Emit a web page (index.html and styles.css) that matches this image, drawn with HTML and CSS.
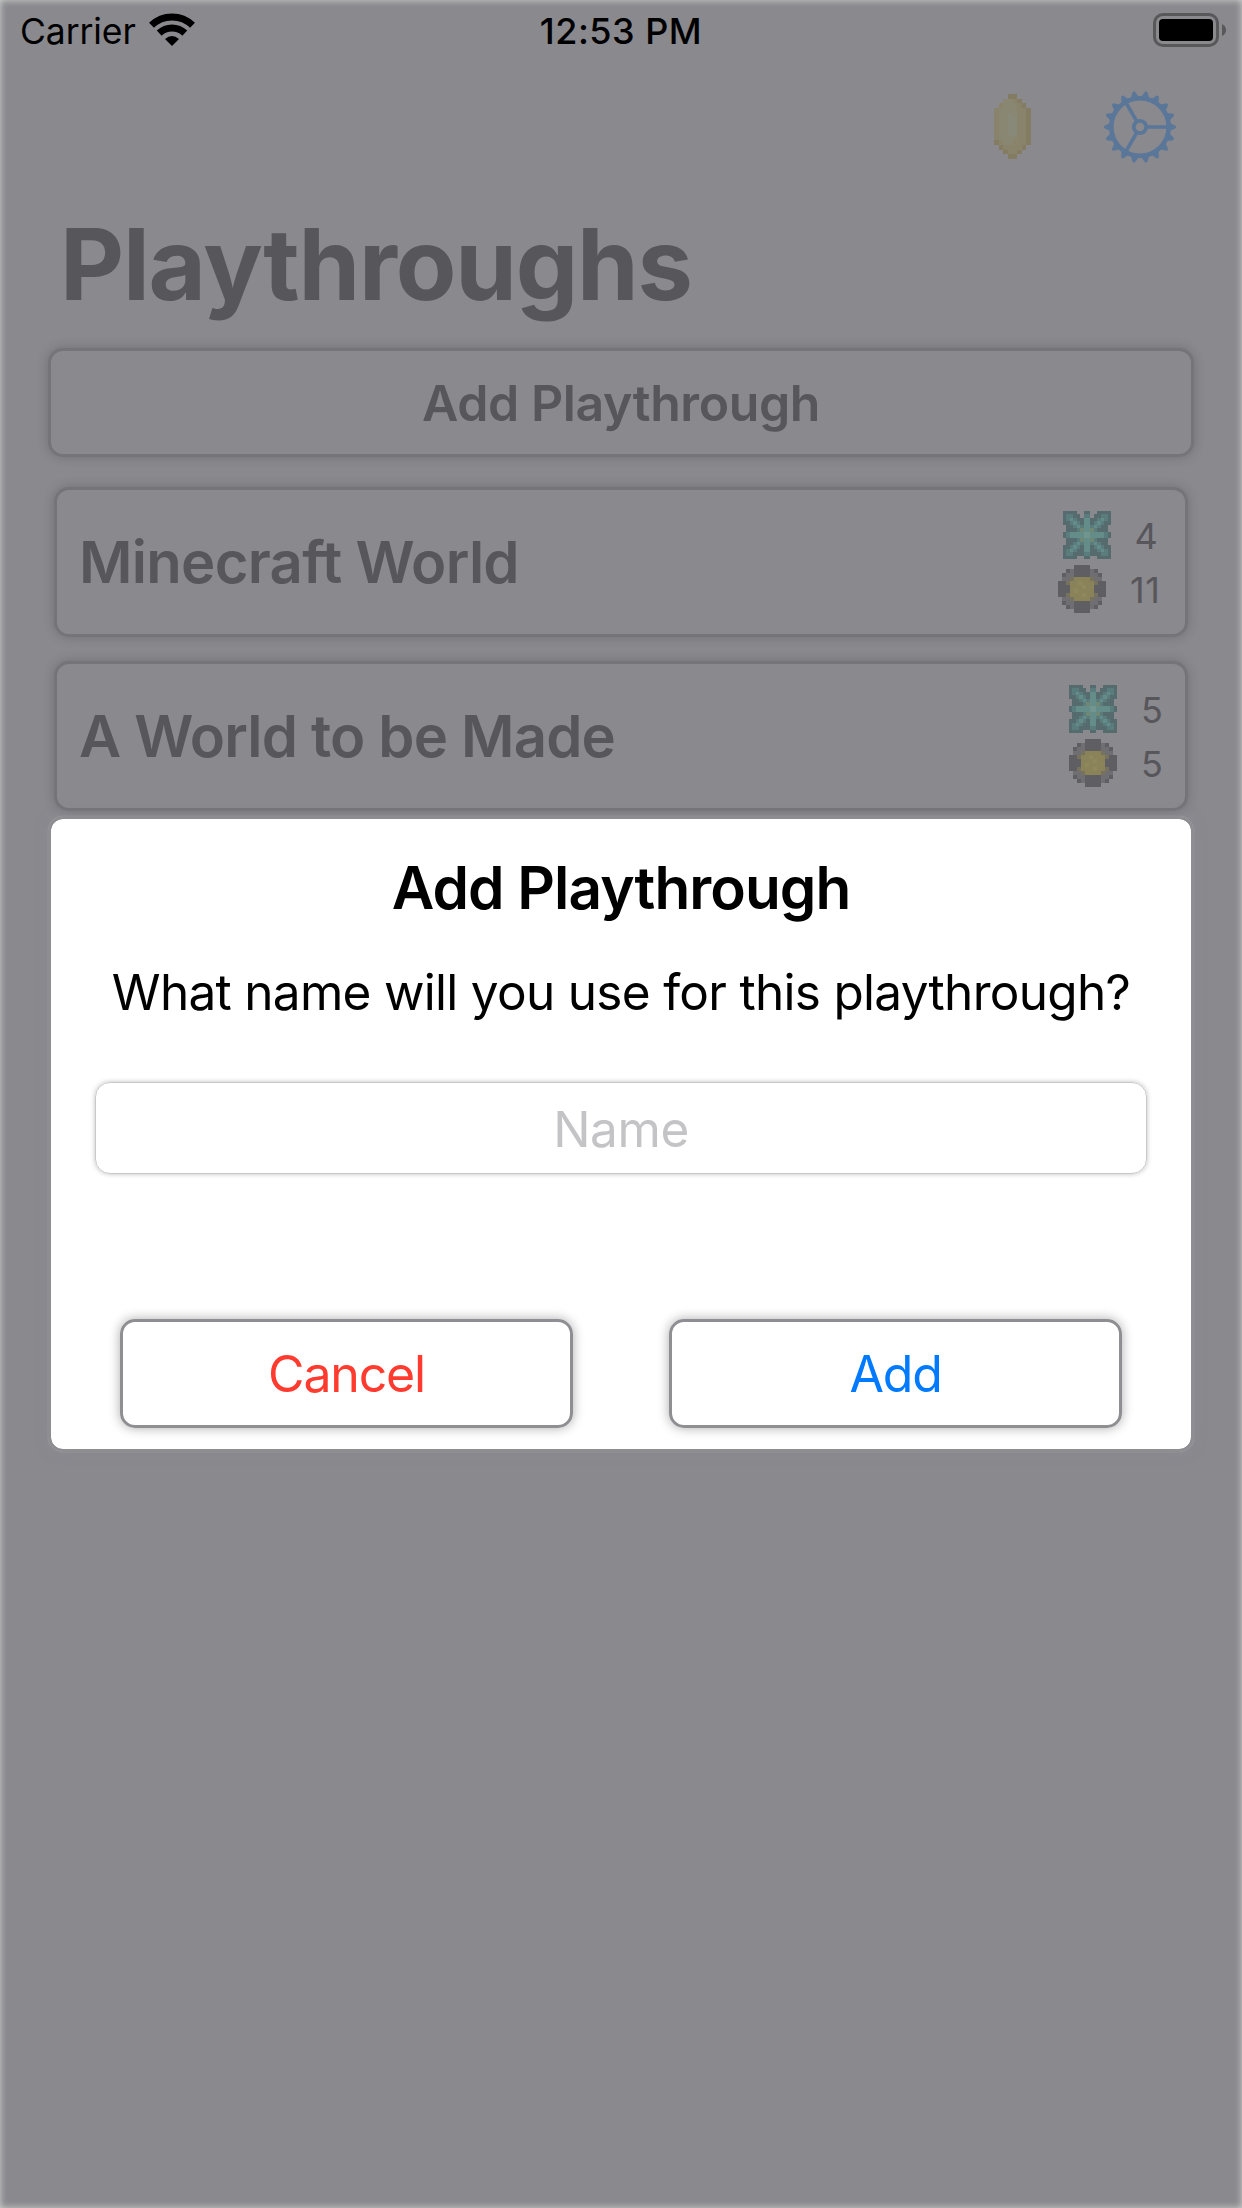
FILE: index.html
```
<!DOCTYPE html>
<html lang="en">
<head>
  <meta charset="utf-8">
  <title>Playthroughs</title>
  <link rel="stylesheet" href="styles.css">
</head>
<body>
  <div class="screen">
    <header class="status">
      <div class="status-left">
        <span class="carrier">Carrier</span>
        <svg class="wifi" width="46" height="34" viewBox="0 0 46 34">
          <path d="M2.5 12.3A29.5 29.5 0 0 1 43.5 12.3M10.2 20.1A18.5 18.5 0 0 1 35.8 20.1" fill="none" stroke="#000" stroke-width="7"/>
          <path d="M23 33L16 26Q23 20 30 26Z"/>
        </svg>
      </div>
      <span class="clock">12:53 PM</span>
      <div class="status-right">
        <svg width="73" height="34" viewBox="0 0 73 34">
          <rect x="1.5" y="1.5" width="63" height="31" rx="8.5" fill="none" stroke="#58575a" stroke-width="3"/>
          <rect x="6" y="6" width="54" height="22" rx="4"/>
          <path d="M69 11Q73 13 73 17T69 23Z" fill="#58575a"/>
        </svg>
      </div>
    </header>

    <nav class="toolbar">
      <svg class="sprite gem" data-sprite="gem"></svg>
      <svg class="gear" width="72" height="72" viewBox="-36 -36 72 72"></svg>
    </nav>

    <h1>Playthroughs</h1>

    <main class="list">
      <div class="add-row">Add Playthrough</div>
      <div class="card">
        <span class="world world-a">Minecraft World</span>
        <div class="stats">
          <div class="stat"><svg class="sprite" data-sprite="star"></svg><span class="n4">4</span></div>
          <div class="stat"><svg class="sprite" data-sprite="coin"></svg><span class="n11">11</span></div>
        </div>
      </div>
      <div class="card">
        <span class="world world-b">A World to be Made</span>
        <div class="stats">
          <div class="stat"><svg class="sprite" data-sprite="star"></svg><span class="n5">5</span></div>
          <div class="stat"><svg class="sprite" data-sprite="coin"></svg><span class="n5">5</span></div>
        </div>
      </div>
    </main>

    <section class="modal">
      <h2>Add Playthrough</h2>
      <p class="prompt">What name will you use for this playthrough?</p>
      <div class="field">Name</div>
      <div class="actions">
        <div class="button cancel">Cancel</div>
        <div class="button add">Add</div>
      </div>
    </section>
    <div class="edge"></div>
  </div>
  <script src="icons.js"></script>
</body>
</html>
```
FILE: styles.css
```
* { box-sizing: border-box; }
body {
  margin: 0;
  font-family: Inter, "Liberation Sans", sans-serif;
  background: #8a898e;
  color: #000;
}
.screen {
  position: relative;
  width: 1242px;
  height: 2208px;
  overflow: hidden;
  background: #8a898e;
}
.edge {
  position: absolute;
  inset: 0;
  pointer-events: none;
  box-shadow: inset 0 0 7px rgba(225, 228, 225, .85);
}
svg { display: block; }

.status {
  display: grid;
  grid-template-columns: 1fr auto 1fr;
  align-items: center;
  height: 60px;
  padding: 2px 16px 0;
}
.status-left { display: flex; align-items: center; padding-left: 4px; }
.carrier { font-size: 35.5px; letter-spacing: -.1px; }
.wifi { margin-left: 13px; margin-top: -3px; }
.clock { font-size: 36px; font-weight: 550; letter-spacing: .5px; }
.status-right { display: flex; justify-content: flex-end; margin-top: -2px; }

.toolbar {
  display: flex;
  justify-content: flex-end;
  align-items: center;
  gap: 73px;
  height: 133px;
  padding-right: 66px;
}
h1 {
  margin: 11px 0 0 60px;
  font-size: 99px;
  font-weight: 700;
  line-height: 120px;
  letter-spacing: -1.2px;
  color: #57565b;
}

.list { padding: 24px 48px 0; color: #57565b; }
.add-row, .card {
  border: 3px solid #757479;
  border-radius: 15px;
  background: #8a898e;
  box-shadow: 0 0 12px rgba(0, 0, 0, .18);
}
.add-row {
  height: 109px;
  text-align: center;
  font-size: 50px;
  font-weight: 580;
  line-height: 105px;
  letter-spacing: -.4px;
}
.card {
  display: flex;
  justify-content: space-between;
  align-items: center;
  height: 150px;
  margin: 30px 6px 0;
  padding: 0 24px 0 22px;
}
.card + .card { margin-top: 24px; }
.world { font-size: 58px; font-weight: 580; }
.world-a { letter-spacing: -.7px; }
.world-b { letter-spacing: -.8px; }
.stats { display: flex; flex-direction: column; align-items: center; gap: 6px; }
.stat {
  display: flex;
  gap: 24px;
  height: 48px;
  font-size: 36px;
  line-height: 50px;
}
.n4 { width: 22px; }
.n11 { width: 31px; letter-spacing: .6px; }
.n5 { width: 20px; }

.modal {
  position: absolute;
  left: 48px;
  top: 816px;
  width: 1146px;
  height: 636px;
  border: 3px solid #8e8e92;
  border-radius: 15px;
  background: #fff;
  background-clip: padding-box;
  box-shadow: 0 0 1px rgba(255, 255, 255, .35), 0 0 12px rgba(142, 142, 147, .5);
  text-align: center;
}
h2 {
  margin: 29px 0 0;
  font-size: 58.5px;
  font-weight: 600;
  line-height: 80px;
  letter-spacing: -.95px;
}
.prompt {
  margin: 34px 0 0;
  font-size: 49.5px;
  line-height: 60px;
  letter-spacing: -.7px;
}
.field {
  height: 92px;
  margin: 60px 44px 0;
  border: 1px solid #c8c8c8;
  border-radius: 15px;
  box-shadow: 0 0 5px rgba(0, 0, 0, .25);
  font-size: 49.5px;
  line-height: 93px;
  letter-spacing: -.4px;
  color: #c4c4c6;
}
.actions { display: flex; gap: 96px; margin: 145px 69px 0; }
.button {
  flex: 1;
  height: 109px;
  border: 3px solid #8e8e93;
  border-radius: 15px;
  box-shadow: 0 0 12px rgba(0, 0, 0, .33);
  font-size: 50px;
  line-height: 105px;
  letter-spacing: -1.2px;
}
.cancel { color: #ff3b30; }
.add { color: #007aff; }
```
FILE: icons.js
```
// Pixel-art sprites: one character per cell, looked up in the palette.
const sprites = {
  star: {
    w: 48, h: 48,
    colors: { D: '#566b6d', M: '#5a7c7c', L: '#648d8a', C: '#739590', Y: '#708873' },
    rows: [
      'DDDD..DD..DDDD', 'DMMDD.MM.DDMMD', 'DMLMDDLLDDMLMD', 'DDMLMDLLDMLMDD',
      '.DDMLMLLMLMDD.', '.DDDMYLLYMDDD.', 'DMLLLLCCLLLLMD', 'DMLLLLCCLLLLMD',
      '.DDDMYLLYMDDD.', '.DDMLMLLMLMDD.', 'DDMLMDLLDMLMDD', 'DMLMDDLLDDMLMD',
      'DMMDDDMMDDDMMD', 'DDDD..DD..DDDD'
    ]
  },
  coin: {
    w: 48, h: 48,
    colors: { D: '#5f5e63', L: '#6f6e73', B: '#77725d', Y: '#8a8359', Z: '#8f885d' },
    rows: [
      '....DDDD....', '..DLDDDDLD..', '.DLLDDDDLLD.', '.LLBYYYYBLL.',
      'DDBYYZYYYBDD', 'DDDYYYZYYDDD', 'DDDYZYYYYDDD', 'DDBYYYZYYBDD',
      '.LLBYYYYBLL.', '.DLLDDDDLLD.', '..DLDDDDLD..', '....DDDD....'
    ]
  },
  gem: {
    w: 37, h: 65,
    colors: { D: '#837b62', M: '#89836c', L: '#898671', C: '#898979' },
    rows: [
      '...DD...', '..LLMD..', '.MLLLMD.', 'MLLLLMMD', 'MLLCLMMD', 'MLLCCMMD', 'MLLCCMMD',
      'MLLCCMMD', 'MLLCCMMD', 'MLLLLMMD', 'DMLLMMMD', '.DMMMMD.', '..DMMD..', '...DD...'
    ]
  }
};

for (const svg of document.querySelectorAll('[data-sprite]')) {
  const { w, h, colors, rows } = sprites[svg.dataset.sprite];
  svg.setAttribute('width', w);
  svg.setAttribute('height', h);
  svg.setAttribute('viewBox', `0 0 ${rows[0].length} ${rows.length}`);
  svg.setAttribute('preserveAspectRatio', 'none');
  svg.setAttribute('shape-rendering', 'crispEdges');
  svg.innerHTML = rows.map((row, y) => [...row].map((c, x) =>
    c === '.' ? '' : `<rect x="${x}" y="${y}" width="1" height="1" fill="${colors[c]}"/>`
  ).join('')).join('');
}

// Gear: toothed rim, hub and three spokes.
let gear = '<circle r="28.7" stroke-width="4.6"/><circle r="6.2" stroke-width="3.8"/>';
for (const a of [0, 120, 240]) gear += `<path d="M7 0H28" stroke-width="3.6" transform="rotate(${a})"/>`;
for (let a = 0; a < 360; a += 20) {
  gear += `<path d="M30 -4L34.5 -1.8Q36 -1.5 36 0T34.5 1.8L30 4Z" fill="#5a7799" stroke="none" transform="rotate(${a})"/>`;
}
document.querySelector('.gear').innerHTML = `<g fill="none" stroke="#5a7799">${gear}</g>`;
```
